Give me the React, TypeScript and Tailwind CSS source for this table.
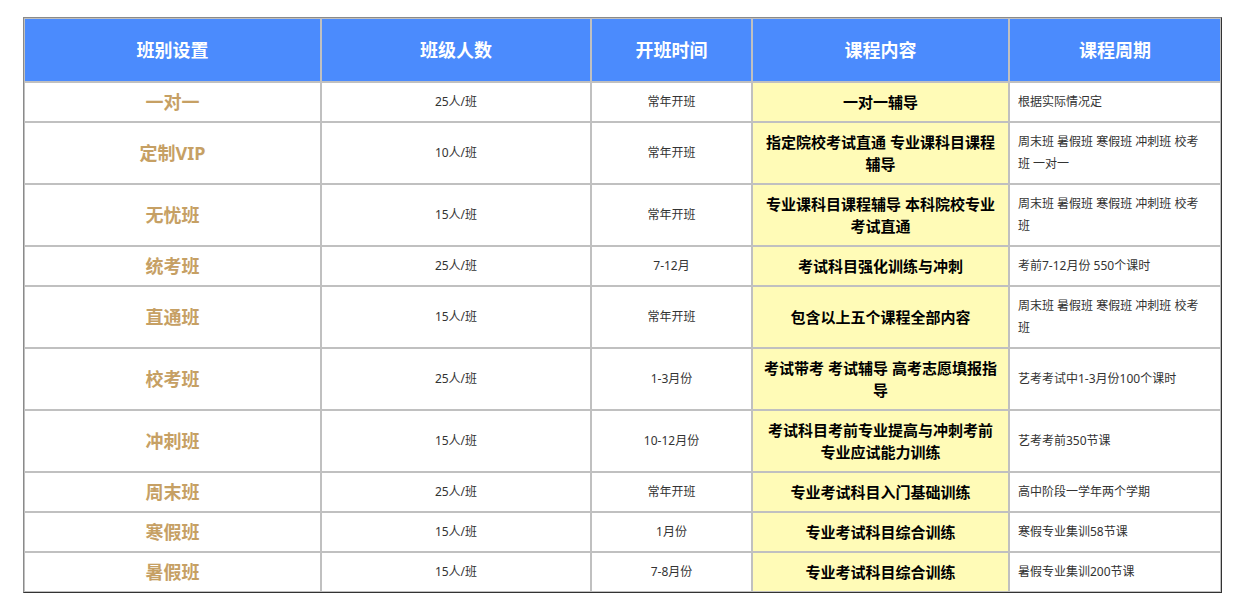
// Course schedule table
interface CourseRow {
    name: string;
    size: string;
    start: string;
    content: string;
    cycle: string;
}

const headers = ['班别设置', '班级人数', '开班时间', '课程内容', '课程周期'];

const rows: CourseRow[] = [
    { name: '一对一', size: '25人/班', start: '常年开班', content: '一对一辅导', cycle: '根据实际情况定' },
    { name: '定制VIP', size: '10人/班', start: '常年开班', content: '指定院校考试直通 专业课科目课程辅导', cycle: '周末班 暑假班 寒假班 冲刺班 校考班 一对一' },
    { name: '无忧班', size: '15人/班', start: '常年开班', content: '专业课科目课程辅导 本科院校专业考试直通', cycle: '周末班 暑假班 寒假班 冲刺班 校考班' },
    { name: '统考班', size: '25人/班', start: '7-12月', content: '考试科目强化训练与冲刺', cycle: '考前7-12月份 550个课时' },
    { name: '直通班', size: '15人/班', start: '常年开班', content: '包含以上五个课程全部内容', cycle: '周末班 暑假班 寒假班 冲刺班 校考班' },
    { name: '校考班', size: '25人/班', start: '1-3月份', content: '考试带考 考试辅导 高考志愿填报指导', cycle: '艺考考试中1-3月份100个课时' },
    { name: '冲刺班', size: '15人/班', start: '10-12月份', content: '考试科目考前专业提高与冲刺考前专业应试能力训练', cycle: '艺考考前350节课' },
    { name: '周末班', size: '25人/班', start: '常年开班', content: '专业考试科目入门基础训练', cycle: '高中阶段一学年两个学期' },
    { name: '寒假班', size: '15人/班', start: '1月份', content: '专业考试科目综合训练', cycle: '寒假专业集训58节课' },
    { name: '暑假班', size: '15人/班', start: '7-8月份', content: '专业考试科目综合训练', cycle: '暑假专业集训200节课' },
];

export default function App() {
    return (
        <div className="min-h-screen w-full bg-white pt-[17px] pl-[23px] font-['Noto_Sans','Noto_Sans_CJK_SC',sans-serif]">
            <table className="table-fixed w-[1199px] border-separate border-spacing-0 border border-t-[#8a8a8a] border-l-[#8a8a8a] border-r-[#333] border-b-[#333]">
                <colgroup>
                    <col className="w-[297px]" />
                    <col className="w-[270px]" />
                    <col className="w-[161px]" />
                    <col className="w-[257px]" />
                    <col className="w-[212px]" />
                </colgroup>
                <thead>
                    <tr>
                        {headers.map((h) => (
                            <th
                                key={h}
                                className="h-[64px] border border-[#c0c0c0] bg-[#4b8bfd] text-center align-middle text-[18px] font-bold leading-[22px] text-white"
                            >
                                {h}
                            </th>
                        ))}
                    </tr>
                </thead>
                <tbody>
                    {rows.map((r) => (
                        <tr key={r.name}>
                            {/* Class name */}
                            <td className="border border-[#c0c0c0] px-2 py-2 text-center align-middle text-[18px] font-bold leading-[22px] text-[#c6a064]">
                                {r.name}
                            </td>
                            {/* Class size */}
                            <td className="border border-[#c0c0c0] px-2 py-2 text-center align-middle text-[12px] leading-[22px] text-[#333]">
                                {r.size}
                            </td>
                            {/* Start time */}
                            <td className="border border-[#c0c0c0] px-2 py-2 text-center align-middle text-[12px] leading-[22px] text-[#333]">
                                {r.start}
                            </td>
                            {/* Content */}
                            <td className="border border-[#c0c0c0] bg-[#fffbb7] px-2 py-2 text-center align-middle text-[15px] font-bold leading-[22px] text-black">
                                {r.content}
                            </td>
                            {/* Cycle */}
                            <td className="border border-[#c0c0c0] pl-2 pr-3 py-2 text-left align-middle text-[12px] leading-[22px] text-[#333]">
                                {r.cycle}
                            </td>
                        </tr>
                    ))}
                </tbody>
            </table>
        </div>
    );
}
